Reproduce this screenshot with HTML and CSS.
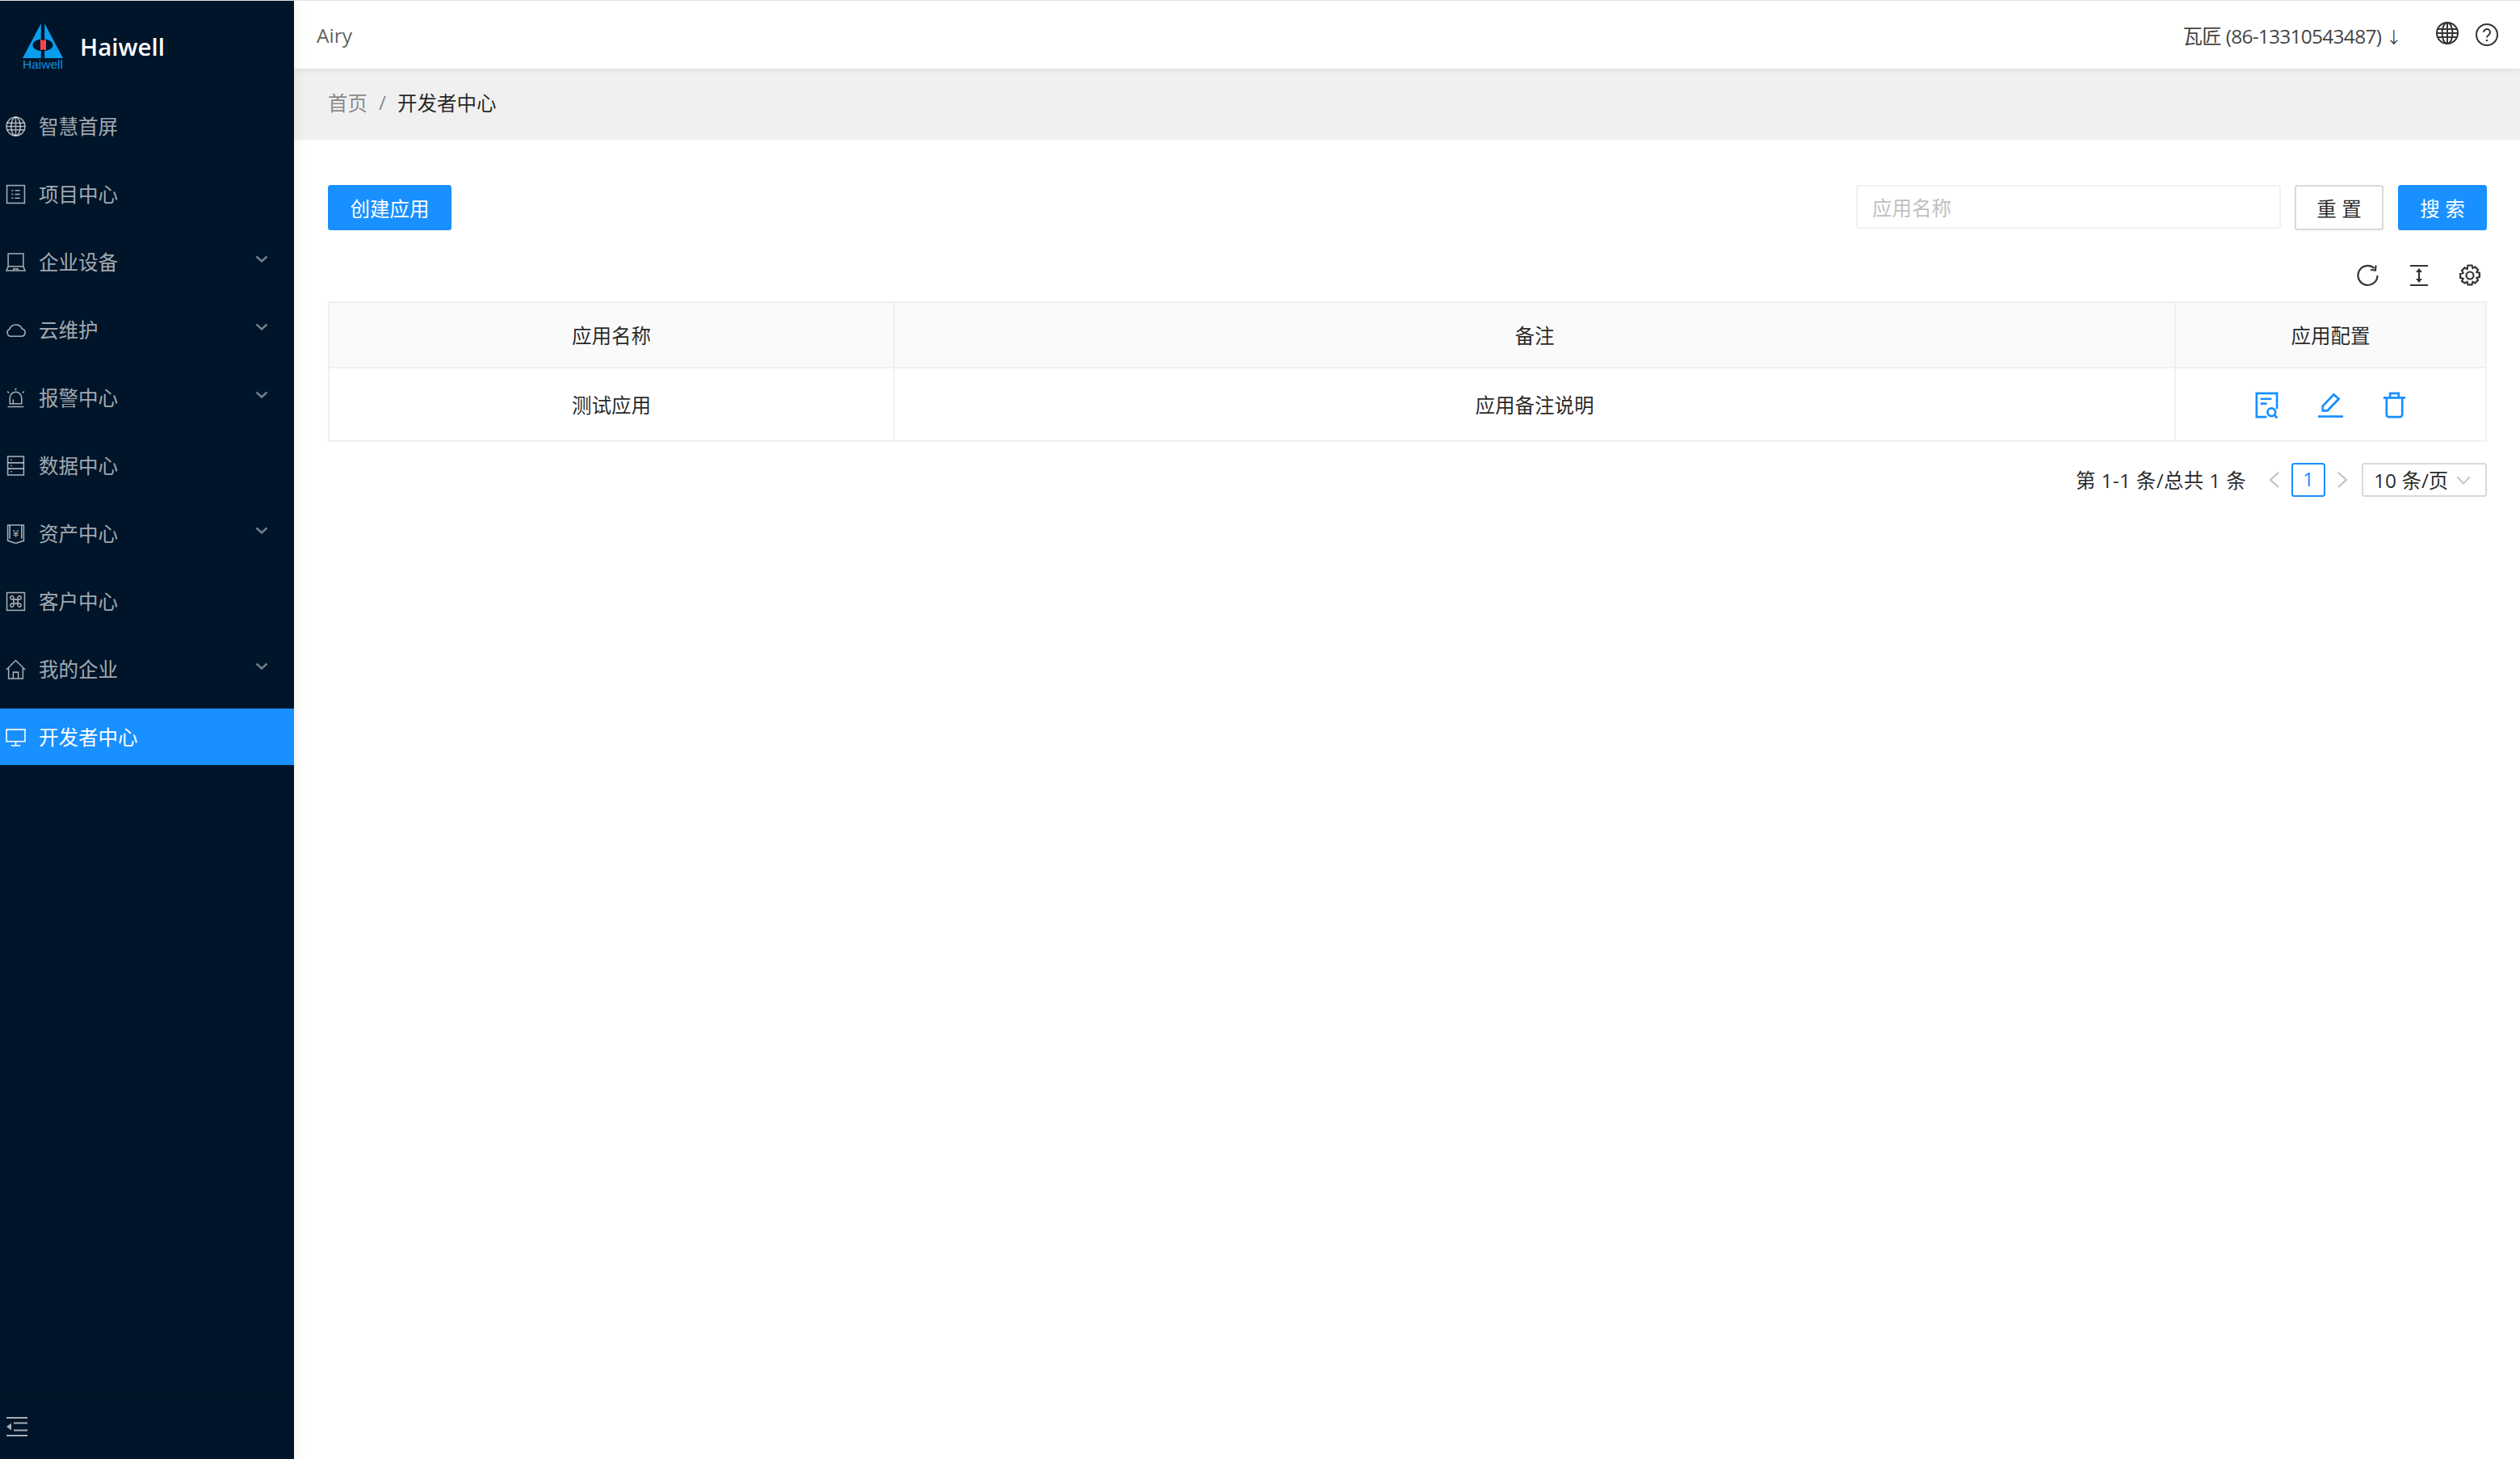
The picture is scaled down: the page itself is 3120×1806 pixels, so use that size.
FILE: index.html
```html
<!DOCTYPE html>
<html lang="en">
<head>
  <meta charset="UTF-8">
  <title>开发者中心</title>
  <link rel="stylesheet" href="styles.css">
</head>
<body>
<div class="app">
  <aside class="side">
    <div class="side-logo">
      <svg class="logo-mark" viewBox="0 0 50 58">
        <path fill="#0a9dee" d="M22.800 0V43H0z"/>
        <path fill="#0a9dee" d="M27.200 0V43H50z"/>
        <ellipse cx="25" cy="26.700" rx="12.500" ry="7.500" fill="#001529"/>
        <path fill="#f4474f" d="M22 20h2l1.500 1.500 1.500-1.500h2v13h-2l-1.500-1.500-1.500 1.500h-2z"/>
        <text class="logo-mark-text" x="25" y="56">Haiwell</text>
      </svg>
      <span class="logo-text">Haiwell</span>
    </div>
    <ul class="menu">
      <li class="menu-item">
        <svg class="menu-icon" viewBox="0 0 24 24"><circle cx="12" cy="12" r="11"/><ellipse cx="12" cy="12" rx="5.500" ry="11"/><path d="M12 1v22M1.500 8h21M1.500 16h21M1 12h22"/></svg>
        <span>智慧首屏</span>
      </li>
      <li class="menu-item">
        <svg class="menu-icon" viewBox="0 0 24 24"><rect x="1.500" y="1.500" width="21" height="21"/><path d="M7 7.500h2M11 7.500h6M7 12h2M11 12h6M7 16.500h2M11 16.500h6"/></svg>
        <span>项目中心</span>
      </li>
      <li class="menu-item">
        <svg class="menu-icon" viewBox="0 0 24 24"><path d="M3 17V2h18v15M1 22l2-5h18l2 5zM9.500 22v-2h5v2"/></svg>
        <span>企业设备</span>
        <svg class="menu-arrow" viewBox="0 0 16 9"><path d="M1.500 1.500 8 7.500l6.500-6"/></svg>
      </li>
      <li class="menu-item">
        <svg class="menu-icon" viewBox="0 0 24 24"><path d="M6 19.500h12.500a4.500 4.500 0 0 0 1-8.900A8 8 0 0 0 4.700 10.900 4.500 4.500 0 0 0 6 19.500z"/></svg>
        <span>云维护</span>
        <svg class="menu-arrow" viewBox="0 0 16 9"><path d="M1.500 1.500 8 7.500l6.500-6"/></svg>
      </li>
      <li class="menu-item">
        <svg class="menu-icon" viewBox="0 0 24 24"><path d="M5 19v-7a7 7 0 0 1 14 0v7zM9 19v-5M2.500 22.500h19M12 .5v2.500M2 4.500l2 1.500M22 4.500l-2 1.500"/></svg>
        <span>报警中心</span>
        <svg class="menu-arrow" viewBox="0 0 16 9"><path d="M1.500 1.500 8 7.500l6.500-6"/></svg>
      </li>
      <li class="menu-item">
        <svg class="menu-icon" viewBox="0 0 24 24"><rect x="2.500" y="1" width="19" height="22"/><path d="M2.500 8.500h19M2.500 15.500h19M6 5h1.500M6 12h1.500M6 19h1.500"/></svg>
        <span>数据中心</span>
      </li>
      <li class="menu-item">
        <svg class="menu-icon" viewBox="0 0 24 24"><path d="M2.500 2h19v18.500L12 23.500 2.500 20.500zM5 2v16M19 2v16"/><text class="menu-icon-glyph" x="12" y="16.500">¥</text></svg>
        <span>资产中心</span>
        <svg class="menu-arrow" viewBox="0 0 16 9"><path d="M1.500 1.500 8 7.500l6.500-6"/></svg>
      </li>
      <li class="menu-item">
        <svg class="menu-icon" viewBox="0 0 24 24"><rect x="1.500" y="1.500" width="21" height="21"/><path d="M9.500 9.500h5v5h-5zM9.500 9.500H8A2 2 0 1 1 9.500 8zM14.500 9.500H16A2 2 0 1 0 14.500 8zM9.500 14.500H8A2 2 0 1 0 9.500 16zM14.500 14.500H16A2 2 0 1 1 14.500 16z"/></svg>
        <span>客户中心</span>
      </li>
      <li class="menu-item">
        <svg class="menu-icon" viewBox="0 0 24 24"><path d="M.8 12.500 12 1.500l11.200 11M3.500 10.500V23h17V10.500M9 23v-7.500h6V23"/></svg>
        <span>我的企业</span>
        <svg class="menu-arrow" viewBox="0 0 16 9"><path d="M1.500 1.500 8 7.500l6.500-6"/></svg>
      </li>
      <li class="menu-item active">
        <svg class="menu-icon" viewBox="0 0 24 24"><path d="M1 3h22v14H1zM12 17v5M6.500 22h11"/></svg>
        <span>开发者中心</span>
      </li>
    </ul>
    <div class="side-foot">
      <svg class="collapse-icon" viewBox="0 0 26 24"><path d="M0 1h26M9 7.500h17M9 16.500h17M0 23h26" fill="none"/><path class="collapse-tri" d="M0 12 6 7.500v9z"/></svg>
    </div>
  </aside>

  <div class="main">
    <header class="topbar">
      <span class="tenant">Airy</span>
      <span class="user">瓦匠 (86-13310543487) <i class="user-arrow">↓</i></span>
      <svg class="top-icon globe" viewBox="0 0 28 28"><circle cx="14" cy="14" r="13"/><ellipse cx="14" cy="14" rx="6.500" ry="13"/><path d="M14 1v26M2.500 9h23M2.500 19h23M1 14h26"/></svg>
      <svg class="top-icon help" viewBox="0 0 28 28"><circle cx="14" cy="14" r="13"/><path d="M10 11a4 4 0 1 1 6.200 3.300c-1.300.9-2.200 1.600-2.200 3.200"/><circle class="dot" cx="14" cy="21" r="1.200"/></svg>
    </header>

    <nav class="crumb">
      <span class="crumb-link">首页</span>
      <span class="crumb-sep">/</span>
      <span class="crumb-now">开发者中心</span>
    </nav>

    <section class="content">
      <div class="filter">
        <button class="btn primary create">创建应用</button>
        <div class="filter-right">
          <input class="search-input" placeholder="应用名称">
          <button class="btn two">重 置</button>
          <button class="btn primary two">搜 索</button>
        </div>
      </div>

      <div class="tools">
        <svg class="tool-icon" viewBox="0 0 28 28"><path d="M25.500 14A12 12 0 1 1 21.500 5M23.500 1.500 23 7.500l-6-.5"/></svg>
        <svg class="tool-icon" viewBox="0 0 28 28"><path d="M3 2h22M3 26h22M14 6v16"/><path class="fill" d="M14 5l4 5h-8zM14 23l4-5h-8z"/></svg>
        <svg class="tool-icon" viewBox="0 0 28 28"><path d="M11.500 1.500h5l1 3.500 3-1.600 3.500 3.500-1.600 3 3.500 1v5l-3.500 1 1.600 3-3.500 3.500-3-1.600-1 3.500h-5l-1-3.500-3 1.600L4 20.900l1.600-3-3.500-1v-5l3.500-1L4 7.900l3.500-3.500 3 1.600z"/><circle cx="14" cy="14" r="4.500"/></svg>
      </div>

      <table class="grid">
        <colgroup>
          <col class="col-name">
          <col class="col-note">
          <col class="col-conf">
        </colgroup>
        <thead>
          <tr><th>应用名称</th><th>备注</th><th>应用配置</th></tr>
        </thead>
        <tbody>
          <tr>
            <td>测试应用</td>
            <td>应用备注说明</td>
            <td>
              <div class="actions">
                <svg class="act-icon" viewBox="0 0 30 34"><path d="M15 32H2V2h26v20M7 9h14M7 15h8"/><circle cx="21" cy="26" r="5"/><path d="m25 30 3.500 3.500"/></svg>
                <svg class="act-icon" viewBox="0 0 32 34"><path d="M6 24V18L20 3.500 26.500 9 12 24z"/><path d="M0 31.500h32"/></svg>
                <svg class="act-icon" viewBox="0 0 30 34"><path d="M1 7.500h28M5 7.500V29a3 3 0 0 0 3 3h14a3 3 0 0 0 3-3V7.500M9.500 7.500V2h11v5.500"/></svg>
              </div>
            </td>
          </tr>
        </tbody>
      </table>

      <div class="pager">
        <span class="pager-total">第 1-1 条/总共 1 条</span>
        <span class="pager-arrow"><svg viewBox="0 0 14 22"><path d="M12 2 2 11l10 9"/></svg></span>
        <span class="pager-num">1</span>
        <span class="pager-arrow"><svg viewBox="0 0 14 22"><path d="M2 2l10 9-10 9"/></svg></span>
        <span class="pager-size"><span class="pager-size-text">10 条/页</span><svg viewBox="0 0 20 12"><path d="M1.500 1.500 10 10.500l8.500-9"/></svg></span>
      </div>
    </section>
  </div>
</div>
</body>
</html>
```

FILE: styles.css
```css
/*reset*/
* {
    box-sizing: border-box;
}

html, body {
    height: 100%;
}

body, ul, li {
    padding: 0;
    margin: 0;
}

li {
    list-style: none;
}

i {
    font-style: normal;
}

body {
    font-family: "Open Sans", "Noto Sans CJK SC", sans-serif;
    font-size: 24.5px;
    font-weight: 400;
    color: rgba(0, 0, 0, .85);
    background: #fff;
    border-top: 1px solid #e2e2e2;
}

button, input {
    font-family: inherit;
    font-size: inherit;
    outline: 0;
}

/*layout*/
.app {
    display: flex;
    height: 1805px;
}

.main {
    flex: 1;
    min-width: 0;
    display: flex;
    flex-direction: column;
}

/*sidebar*/
.side {
    width: 364px;
    flex: none;
    display: flex;
    flex-direction: column;
    background: #001529;
    color: rgba(255, 255, 255, .65);
    box-shadow: 4px 0 14px rgba(29, 35, 41, .05);
    position: relative;
    z-index: 3;
}

.side-logo {
    height: 120px;
    padding: 28px 0 0 28px;
    display: flex;
    align-items: flex-start;
}

.logo-mark {
    width: 50px;
    height: 58px;
    flex: none;
}

.logo-mark-text {
    font-family: "Liberation Sans", sans-serif;
    font-size: 15.500px;
    fill: #0a8fe0;
    text-anchor: middle;
}

.logo-text {
    margin: 6px 0 0 21px;
    font-size: 29.500px;
    line-height: 46px;
    font-weight: 600;
    color: #fff;
}

.menu {
    flex: 1;
}

.menu-item {
    height: 70px;
    margin-bottom: 14px;
    padding: 0 32px 0 7px;
    display: flex;
    align-items: center;
}

.menu-item span {
    margin-top: -2px;
}

.menu-item.active {
    background: #1890ff;
    color: #fff;
}

.menu-icon {
    width: 25px;
    height: 25px;
    margin-right: 16px;
    flex: none;
    fill: none;
    stroke: currentColor;
    stroke-width: 1.500;
}

.menu-icon-glyph {
    font-family: "Liberation Sans", sans-serif;
    font-size: 13px;
    fill: currentColor;
    stroke: none;
    text-anchor: middle;
}

.menu-arrow {
    width: 16px;
    height: 9px;
    margin: -7px 0 0 auto;
    fill: none;
    stroke: rgba(255, 255, 255, .45);
    stroke-width: 2.500;
}

.side-foot {
    height: 76px;
    padding: 23px 0 0 8px;
    border-top: 1px solid rgba(0, 0, 0, .12);
}

.collapse-icon {
    display: block;
    width: 26px;
    height: 24px;
    stroke: #a6adb4;
    stroke-width: 2;
}

.collapse-tri {
    fill: #a6adb4;
    stroke: none;
}

/*topbar*/
.topbar {
    height: 84px;
    padding-left: 28px;
    display: flex;
    align-items: center;
    background: #fff;
    box-shadow: 0 2px 7px rgba(0, 21, 41, .08);
    position: relative;
    z-index: 2;
}

.tenant {
    color: rgba(0, 0, 0, .65);
}

.user {
    margin-left: auto;
    color: rgba(0, 0, 0, .75);
    letter-spacing: -.75px;
}

.user-arrow {
    font-size: 20px;
}

.top-icon {
    width: 28px;
    height: 28px;
    fill: none;
    stroke: #333;
    stroke-width: 2;
}

.top-icon .dot {
    fill: #333;
    stroke: none;
}

.globe {
    margin: -4px 0 0 43px;
}

.help {
    margin: 0 27px 0 21px;
}

/*breadcrumb*/
.crumb {
    height: 88px;
    padding: 0 0 6px 42px;
    display: flex;
    align-items: center;
    background: #f0f0f0;
}

.crumb-link, .crumb-sep {
    color: rgba(0, 0, 0, .45);
}

.crumb-sep {
    margin: 0 14px;
}

/*content*/
.content {
    flex: 1;
    padding: 56px 41px 0 42px;
}

.filter {
    display: flex;
    justify-content: space-between;
}

.filter-right {
    display: flex;
    align-items: flex-start;
}

.btn {
    height: 56px;
    padding: 0;
    border: 2px solid #d9d9d9;
    border-radius: 3.500px;
    background: #fff;
    color: rgba(0, 0, 0, .85);
    box-shadow: 0 2px 0 rgba(0, 0, 0, .015);
}

.btn.primary {
    border-color: #1890ff;
    background: #1890ff;
    color: #fff;
}

.create {
    width: 153px;
}

.two {
    width: 110px;
    margin-left: 18px;
}

.search-input {
    width: 526px;
    height: 54px;
    margin-right: -1px;
    padding: 2px 18px 0;
    border: 2px solid #f0f0f0;
    border-radius: 3.500px;
    color: rgba(0, 0, 0, .85);
}

.search-input::placeholder {
    color: #bfbfbf;
}

.tools {
    height: 88px;
    padding: 42px 7px 0 0;
    display: flex;
    justify-content: flex-end;
    gap: 35px;
}

.tool-icon {
    width: 28px;
    height: 28px;
    fill: none;
    stroke: #333;
    stroke-width: 2.200;
}

.tool-icon .fill {
    fill: #333;
    stroke: none;
}

/*table*/
.grid {
    width: 100%;
    table-layout: fixed;
    border-collapse: collapse;
    text-align: center;
}

.col-name {
    width: 700px;
}

.col-conf {
    width: 385px;
}

.grid th, .grid td {
    padding: 0;
    border: 2px solid #f0f0f0;
    font-weight: 400;
}

.grid th {
    height: 81px;
    background: #fafafa;
}

.grid td {
    height: 91px;
}

.actions {
    margin-top: 2px;
    display: flex;
    justify-content: center;
    gap: 48px;
}

.act-icon {
    width: 31px;
    height: 33px;
    fill: none;
    stroke: #1890ff;
    stroke-width: 2.800;
}

/*pagination*/
.pager {
    margin-top: 26px;
    display: flex;
    justify-content: flex-end;
    align-items: center;
}

.pager-total {
    margin: -2px 14px 0 0;
    letter-spacing: .3px;
}

.pager-arrow {
    width: 42px;
    height: 42px;
    display: flex;
    align-items: center;
    justify-content: center;
}

.pager-arrow svg {
    width: 14px;
    height: 22px;
    fill: none;
    stroke: #bfbfbf;
    stroke-width: 2;
}

.pager-num {
    width: 42px;
    height: 42px;
    border: 2px solid #1890ff;
    border-radius: 3.500px;
    color: #1890ff;
    line-height: 36px;
    text-align: center;
}

.pager-size {
    width: 155px;
    height: 42px;
    margin-left: 3px;
    padding: 0 18px 0 13px;
    display: flex;
    align-items: center;
    justify-content: space-between;
    border: 2px solid #d9d9d9;
    border-radius: 3.500px;
}

.pager-size-text {
    margin-top: -2px;
}

.pager-size svg {
    width: 18px;
    height: 11px;
    fill: none;
    stroke: #bfbfbf;
    stroke-width: 2;
}
```
